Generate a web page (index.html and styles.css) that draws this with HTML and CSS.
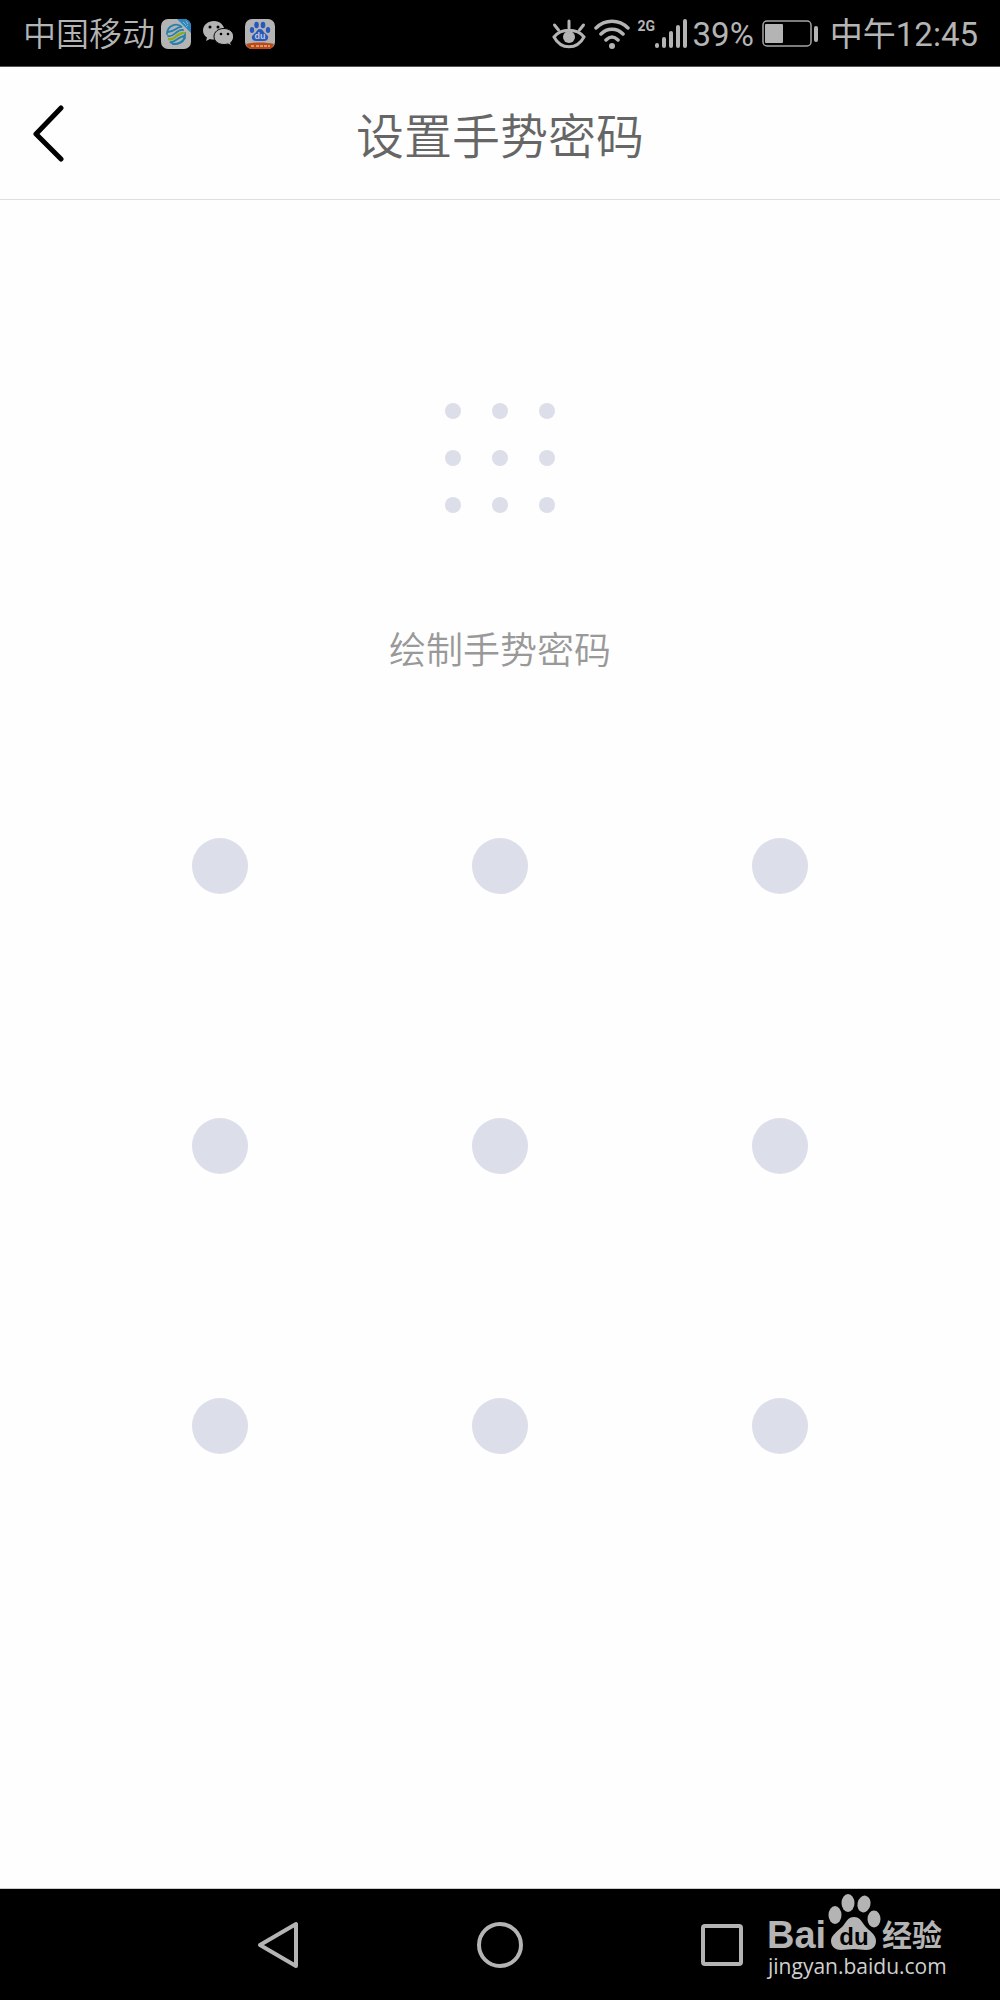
FILE: index.html
```html
<!DOCTYPE html>
<html lang="zh-CN">
<head>
<meta charset="utf-8">
<meta name="viewport" content="width=device-width, initial-scale=1">
<title>设置手势密码</title>
<link rel="stylesheet" href="styles.css">
</head>
<body>
<div class="screen">
  <div class="status">
    <div class="status-left">
      <span class="carrier">中国移动</span>
      <div class="notices">
        <svg width="30" height="30" viewBox="0 0 30 30" aria-hidden="true">
          <rect width="30" height="30" rx="7" fill="#b4b4b4"/>
          <path d="M16 0h7a7 7 0 0 1 7 7v7z" fill="#2b86bd"/>
          <path d="M22 3l3 3M25 2l2 3M25 8l2-2" stroke="#8db5ce" fill="none"/>
          <g fill="none" stroke-width="1.800" stroke-linecap="round">
            <path d="M6 15C6 7 15 3 21 8c-5-1-7 5-14 5M24 14c1 9-8 14-15 9 6 1 8-6 15-6" stroke="#2580b0"/>
            <path d="M7 17c6 2 8-7 15-6M12 25c6 0 10-3 12-6" stroke="#2580b0"/>
            <path d="M8 20c6 2 8-7 15-6" stroke="#8cad20" stroke-width="2.500"/>
          </g>
        </svg>
        <svg width="30" height="30" viewBox="0 0 30 30" aria-hidden="true">
          <path d="M11 2C5 2 0 6 0 11.500c0 3 1.500 5.500 4 7L3 22l4-2c2 .6 4 .8 6 .4L22 12C21 6 17 2 11 2z" fill="#b4b4b4"/>
          <path d="M21 9.500c-6 0-10 3.500-10 8s4 8 10 8c1.500 0 2.500-.2 4-.6l3.500 2-.9-3.200c2-1.500 3-3.700 3-6.200 0-4.500-4-8-9.600-8z" fill="#b4b4b4" stroke="#000"/>
          <g><circle cx="7" cy="8" r="1.500"/><circle cx="15" cy="8" r="1.500"/><circle cx="18" cy="15" r="1.300"/><circle cx="25" cy="15" r="1.300"/></g>
        </svg>
        <svg width="30" height="30" viewBox="0 0 30 30" aria-hidden="true">
          <rect width="30" height="30" rx="7" fill="#b4b4b4"/>
          <path d="M1 25c8-2 20-2 28 0-1 3-3 5-6 5H7c-3 0-5-2-6-5z" fill="#bd4815"/>
          <path d="M6 27h3M11 27h14" stroke="#d69b70" stroke-width="2" stroke-dasharray="3 1"/>
          <g fill="#2857bd">
            <ellipse cx="11.500" cy="6" rx="2.300" ry="3.200"/><ellipse cx="18" cy="6" rx="2.300" ry="3.200"/>
            <ellipse cx="7" cy="11" rx="2.200" ry="3"/><ellipse cx="23" cy="11" rx="2.200" ry="3"/>
            <path d="M15 10c-3 0-3 3-6 5-4 3-2 7 2 7h8c4 0 6-4 2-7-3-2-3-5-6-5z"/>
          </g>
          <text class="tiny-du" x="15" y="20" text-anchor="middle">du</text>
        </svg>
      </div>
    </div>
    <div class="status-right">
      <svg width="34" height="32" viewBox="0 0 34 32" fill="none" stroke="#b4b4b4" stroke-width="3" stroke-linecap="round" aria-hidden="true">
        <path d="M2 19C9 10 25 10 32 19 25 32 9 32 2 19z"/>
        <path d="M17 3v7M2.500 7l4 5M31.500 7l-4 5"/>
        <circle cx="17" cy="19" r="6" fill="#b4b4b4" stroke="none"/>
      </svg>
      <svg class="wifi" width="36" height="32" viewBox="0 0 36 32" fill="none" stroke="#b4b4b4" stroke-width="3.500" stroke-linecap="round" aria-hidden="true">
        <path d="M2 10C11 1 25 1 34 10M7 16c6-6.500 16-6.500 22 0M12 22c4-4 8-4 12 0"/>
        <circle cx="18" cy="28" r="3" fill="#b4b4b4" stroke="none"/>
      </svg>
      <div class="signal">
        <span class="network">2G</span>
        <svg width="32" height="32" viewBox="0 0 32 32" stroke="#b4b4b4" stroke-width="4" stroke-linecap="round" aria-hidden="true">
          <path d="M2 27v1M9 21v7M16 15v13M23 9v19M30 3v25"/>
        </svg>
      </div>
      <span class="percent">39%</span>
      <svg class="battery" width="56" height="28" viewBox="0 0 56 28" aria-hidden="true">
        <rect x="1" y="1" width="48" height="25" rx="4" fill="none" stroke="#a5a5a5" stroke-width="1.500"/>
        <rect x="3" y="4" width="18" height="19" rx="1" fill="#b4b4b4"/>
        <rect x="52" y="6" width="4" height="16" rx="2" fill="#b4b4b4"/>
      </svg>
      <span class="time">中午12:45</span>
    </div>
  </div>

  <header class="header">
    <button class="back" type="button" aria-label="返回">
      <svg width="32" height="58" viewBox="0 0 32 58" fill="none" stroke="#000" stroke-width="5" stroke-linecap="round" stroke-linejoin="round" aria-hidden="true"><path d="M29 4L4 30l25 25"/></svg>
    </button>
    <h1 class="title">设置手势密码</h1>
  </header>

  <main class="content">
    <div class="preview" aria-hidden="true">
      <i></i><i></i><i></i><i></i><i></i><i></i><i></i><i></i><i></i>
    </div>
    <p class="hint">绘制手势密码</p>
    <div class="pad">
      <button type="button" aria-label="1"></button><button type="button" aria-label="2"></button><button type="button" aria-label="3"></button>
      <button type="button" aria-label="4"></button><button type="button" aria-label="5"></button><button type="button" aria-label="6"></button>
      <button type="button" aria-label="7"></button><button type="button" aria-label="8"></button><button type="button" aria-label="9"></button>
    </div>
  </main>

  <nav class="navbar">
    <div class="nav-keys">
      <button type="button" aria-label="返回键"><svg width="48" height="48" viewBox="0 0 48 48" aria-hidden="true"><path d="M43 3v42L7 24z"/></svg></button>
      <button type="button" aria-label="主页键"><svg width="48" height="48" viewBox="0 0 48 48" aria-hidden="true"><circle cx="24" cy="24" r="21"/></svg></button>
      <button type="button" aria-label="最近任务键"><svg width="48" height="48" viewBox="0 0 48 48" aria-hidden="true"><rect x="4" y="5" width="38" height="38" rx="2"/></svg></button>
    </div>
    <div class="watermark">
      <svg width="182" height="86" viewBox="0 0 182 86" aria-label="Baidu 经验">
        <text class="wm-bai" x="1" y="54">Bai</text>
        <g>
          <ellipse cx="69" cy="21" rx="6.500" ry="9"/>
          <ellipse cx="82" cy="9" rx="6.500" ry="9"/>
          <ellipse cx="98" cy="10" rx="6.500" ry="8.500" transform="rotate(12 98 10)"/>
          <ellipse cx="108" cy="25" rx="6.500" ry="8.500"/>
          <path d="M88 23c-6 0-8 5-11 9-5 5-12 9-12 15 0 6 5 9 10 9 5 0 8-1 13-1s8 1 12 1c6 0 10-3 10-9 0-7-7-10-11-15-3-4-5-9-11-9z"/>
        </g>
        <text class="wm-du" x="88" y="51" text-anchor="middle">du</text>
        <text class="wm-jy" x="116" y="52">经验</text>
        <text class="wm-url" x="2" y="80">jingyan.baidu.com</text>
      </svg>
    </div>
  </nav>
</div>
</body>
</html>
```

FILE: styles.css
```css
* { box-sizing: border-box; }

body {
  margin: 0;
  font-family: Roboto, "Noto Sans CJK SC", sans-serif;
  background: #fefefe;
}

button {
  margin: 0;
  padding: 0;
  border: 0;
  background: none;
  cursor: pointer;
}

svg { display: block; flex: none; }

.screen {
  min-height: 100vh;
  display: flex;
  flex-direction: column;
}

/* Status bar */
.status {
  height: 67px;
  padding: 2px 22px 0 23px;
  display: flex;
  justify-content: space-between;
  align-items: center;
  background: #000;
  border-bottom: 1px solid #555;
  color: #b4b4b4;
  font-size: 33px;
  line-height: 40px;
  white-space: nowrap;
}

.status-left, .status-right, .notices { display: flex; align-items: center; }
.status-left { gap: 6px; }
.notices { gap: 12px; }
.carrier, .time, .percent { padding-top: 2px; }
.carrier { font-weight: 350; }
.wifi { margin-left: 8px; }

.signal {
  display: flex;
  align-items: flex-start;
  margin: 0 6px 0 8px;
}

.network {
  width: 17px;
  font: 700 14px/16px Roboto, sans-serif;
}

.battery { margin: 0 12px 0 8px; }

.tiny-du { font: 700 9px "Liberation Sans", sans-serif; fill: #c4c8d4; }

/* Title bar */
.header {
  height: 133px;
  display: grid;
  grid-template-columns: 96px 1fr 96px;
  align-items: center;
  border-bottom: 1px solid #dedede;
}

.back {
  height: 100%;
  padding-left: 32px;
  display: flex;
  align-items: center;
}

.title {
  margin: 0;
  padding-top: 10px;
  color: #666;
  font-size: 48px;
  line-height: 72px;
  font-weight: 350;
  text-align: center;
}

/* Gesture area */
.content {
  flex: 1;
  padding: 203px 0 120px;
  display: flex;
  flex-direction: column;
  align-items: center;
}

.preview {
  display: grid;
  grid-template-columns: repeat(3, 16px);
  gap: 31px;
}

.preview i {
  height: 16px;
  border-radius: 50%;
  background: #dcdee9;
}

.hint {
  margin: 111px 0 158px;
  color: #999;
  font-size: 37px;
  line-height: 56px;
  font-weight: 350;
}

.pad {
  width: 62%;
  max-width: 616px;
  display: grid;
  grid-template-columns: repeat(3, 56px);
  justify-content: space-between;
  row-gap: 224px;
}

.pad button {
  height: 56px;
  border-radius: 50%;
  background: #dcdee9;
}

/* System navigation */
.navbar {
  position: relative;
  height: 112px;
  border-top: 1px solid #ccc;
  background: #000;
}

.nav-keys {
  width: 67%;
  height: 100%;
  margin: 0 auto;
  display: grid;
  grid-template-columns: repeat(3, 1fr);
}

.nav-keys button {
  display: flex;
  align-items: center;
  justify-content: center;
}

.nav-keys path, .nav-keys circle, .nav-keys rect {
  fill: none;
  stroke: #b4b4b4;
  stroke-width: 4;
  stroke-linejoin: round;
}

.watermark {
  position: absolute;
  top: 5px;
  right: 52px;
  fill: #b4b4b4;
}

.wm-bai { font: 700 38px "Liberation Sans", sans-serif; }
.wm-du { font: 700 24px "Liberation Sans", sans-serif; fill: #000; }
.wm-jy { font: 700 30px "Noto Sans CJK SC", sans-serif; }
.wm-url { font: 400 21px "Open Sans", sans-serif; fill: #d0d0d0; }
```
